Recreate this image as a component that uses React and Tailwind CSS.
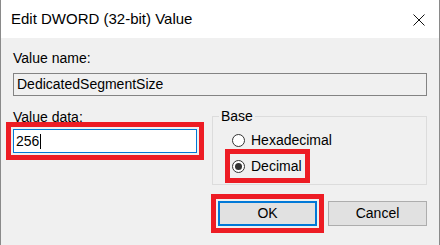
import React from 'react';

const font = { fontFamily: '"Liberation Sans", Arial, sans-serif' };

const Radio = ({ checked }) => (
  <span className="w-[13px] h-[13px] rounded-full border border-[#333333] bg-white flex items-center justify-center shrink-0">
    {checked && <span className="w-[7px] h-[7px] rounded-full bg-[#333333]" />}
  </span>
);

export default function App() {
  return (
    <div
      className="w-[440px] h-[245px] bg-[#f0f0f0] border-l border-r border-[#8a8a8a] flex flex-col overflow-hidden text-black"
      style={font}
    >
      {/* title bar */}
      <div className="h-[38px] bg-white flex items-center justify-between pl-[10px] pr-[14px] shrink-0">
        <span className="text-[15px] leading-[20px]">Edit DWORD (32-bit) Value</span>
        <svg width="12" height="12" viewBox="0 0 12 12" className="mt-[1px]">
          <path d="M0.5 0.5 L11.5 11.5 M11.5 0.5 L0.5 11.5" stroke="#111" strokeWidth="1" fill="none" />
        </svg>
      </div>

      <div className="px-[12px] flex flex-col">
        <div className="mt-[10px] text-[14px] leading-[20px]">Value name:</div>
        <div className="mt-[5px] w-[414px] h-[23px] border border-[#838383] flex items-center pl-[3px] text-[14px]">
          DedicatedSegmentSize
        </div>

        <div className="flex mt-[10px]">
          <div className="w-[184px] flex flex-col">
            <div className="mt-[1px] text-[14px] leading-[20px]">Value data:</div>
            <div className="mt-[2px] h-[24px] bg-white border border-[#0078d7] flex items-center pl-[2px] text-[14px] outline-[5px] outline-solid outline-[#ed1c24] outline-offset-[2px]">
              <span>256</span>
              <span className="w-px h-[15px] bg-black ml-[1px]" />
            </div>
          </div>

          <fieldset className="ml-[15px] w-[215px] h-[79px] border border-[#dcdcdc] pb-[8px]">
            <legend className="ml-[6px] px-[2px] text-[14px] leading-[20px]">Base</legend>
            <div className="flex items-center h-[20px] mt-[4px] pl-[19px] text-[14px]">
              <Radio />
              <span className="ml-[6px]">Hexadecimal</span>
            </div>
            <div className="mt-[6px] pl-[19px] flex">
              <div className="flex items-center h-[20px] text-[14px] outline-[5px] outline-solid outline-[#ed1c24] outline-offset-[2px] pr-[1px]">
                <Radio checked />
                <span className="ml-[6px]">Decimal</span>
              </div>
            </div>
          </fieldset>
        </div>

        <div className="flex justify-end gap-[11px] mt-[16px]">
          <button className="w-[99px] h-[25px] bg-[#e1e1e1] border-2 border-[#0078d7] text-[14px] outline-[5px] outline-solid outline-[#ed1c24] outline-offset-[2px]">
            OK
          </button>
          <button className="w-[99px] h-[25px] bg-[#e1e1e1] border border-[#adadad] text-[14px]">
            Cancel
          </button>
        </div>
      </div>
    </div>
  );
}
